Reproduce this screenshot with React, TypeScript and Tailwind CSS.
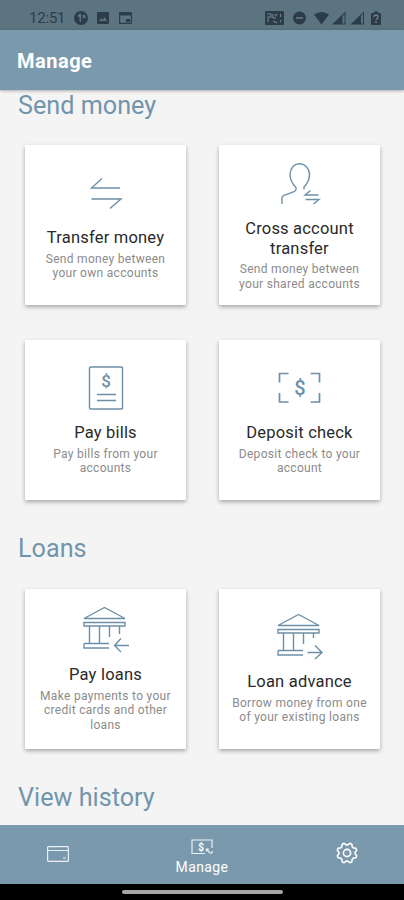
import type { ReactNode } from "react";

const ink = "#6d90a6";

function Svg({ w, h, className = "", children }: { w: number; h: number; className?: string; children: ReactNode }) {
  return (
    <svg width={w} height={h} viewBox={`0 0 ${w} ${h}`} fill="none" stroke={ink} strokeWidth="1.4" className={`block shrink-0 overflow-visible ${className}`}>
      {children}
    </svg>
  );
}

const Transfer = () => (
  <Svg w={44} h={44}>
    <path d="M36 17H7.500L18 7.500M7.500 28H37L26 37.500" />
  </Svg>
);

const Person = () => (
  <Svg w={44} h={44}>
    <path d="M4 42V36Q4 34 6 33.300L15.500 29.800Q19 28.500 17.800 25.300C14 21.500 12 17 12 12C12.500 5.500 16.500 1.800 21.500 1.800S31 5.500 31.500 12C31.500 17 29.500 21.500 26 25V27.500" />
    <path d="M40.500 33H27L32.500 28.500M27.500 37.500H41L35.500 42" />
  </Svg>
);

const Dollar = ({ x, y, size }: { x: number; y: number; size: number }) => (
  <text x={x} y={y} fontSize={size} fill={ink} stroke="none" textAnchor="middle" className="font-[Roboto,sans-serif] font-medium">$</text>
);

const Bill = () => (
  <Svg w={44} h={44}>
    <rect x="5.500" y="1" width="33" height="42" rx="1" />
    <Dollar x={22} y={20.5} size={17} />
    <path d="M13 28.500H32M13 34.500H32" />
  </Svg>
);

const Deposit = () => (
  <Svg w={44} h={44}>
    <path strokeWidth="1.700" d="M1.500 16.500V7.500H10.500M32.500 7.500H41.500V16.500M41.500 27V36H32.500M10.500 36H1.500V27" />
    <Dollar x={22} y={28.5} size={20} />
  </Svg>
);

const Bank = ({ out = false }: { out?: boolean }) => (
  <Svg w={46} h={46}>
    <path d="M1 12.500L21.500 1.500L42 12.500ZM1 16.500H42V20H1ZM6.500 20V37M16.500 20V37M26.500 20V31M1 37.500H26M1 37.500V42H26" />
    {out ? <path d="M36.500 20V25M30.500 39.500H45.500M38 32.500L45 39.500L38 46" /> : <path d="M36.500 20V28M46 39.500H31.500M38 32.500L31.500 39.500L38 46" />}
  </Svg>
);

type Tile = { title: ReactNode; text: string[]; icon: ReactNode; pad: string };

const send: Tile[] = [
  { title: "Transfer money", text: ["Send money between", "your own accounts"], icon: <Transfer />, pad: "pt-[26px]" },
  { title: <>Cross account<br />transfer</>, text: ["Send money between", "your shared accounts"], icon: <Person />, pad: "pt-[17px]" },
  { title: "Pay bills", text: ["Pay bills from your", "accounts"], icon: <Bill />, pad: "pt-[26px]" },
  { title: "Deposit check", text: ["Deposit check to your", "account"], icon: <Deposit />, pad: "pt-[26px]" },
];

const loans: Tile[] = [
  { title: "Pay loans", text: ["Make payments to your", "credit cards and other", "loans"], icon: <Bank />, pad: "pt-[17px]" },
  { title: "Loan advance", text: ["Borrow money from one", "of your existing loans"], icon: <Bank out />, pad: "pt-[24px]" },
];

function Grid({ tiles }: { tiles: Tile[] }) {
  return (
    <div className="grid grid-cols-[161px_161px] gap-x-[33px] gap-y-[35px] pl-[25px]">
      {tiles.map((t, i) => (
        <div key={i} className={`flex h-[160px] flex-col items-center rounded-[1px] bg-white text-center shadow-[0_2px_4px_rgba(0,0,0,0.32)] ${t.pad}`}>
          {t.icon}
          <div className="mt-[13px] text-[16.500px] leading-[19.500px] tracking-[0.200px] text-[#292929]">{t.title}</div>
          <div className="mt-[4px] text-[12px] leading-[14.600px] tracking-[0.300px] text-[#8b8b8b]">
            {t.text.map((line) => <div key={line} className="whitespace-nowrap">{line}</div>)}
          </div>
        </div>
      ))}
    </div>
  );
}

const heading = "pl-[18px] text-[25.200px] leading-[30px] text-[#7295ac]";

function StatusBar() {
  return (
    <div className="flex h-[30px] shrink-0 items-center bg-[#5c7380] pt-[6px] pl-[29px] text-[#2c3c48]">
      <span className="w-[45px] text-[15px] leading-[20px] tracking-[-0.200px]">12:51</span>
      <svg width="59" height="14" viewBox="0 0 59 14" fill="currentColor">
        <circle cx="7" cy="7" r="7" />
        <path d="M4 3.500L7 2.500V11.500L5.500 10V6.500L4 5.500ZM8.500 4H11.500V7H8.500Z" fill="#5c7380" />
        <path fillRule="evenodd" d="M24 1H34Q35 1 35 2V12Q35 13 34 13H24Q23 13 23 12V2Q23 1 24 1ZM25 10H33L30.500 6L28.500 9L27 7Z" />
        <path fillRule="evenodd" d="M46 1H57Q58 1 58 2V12Q58 13 57 13H46Q45 13 45 12V2Q45 1 46 1ZM46.200 4.500V11.800H56.800V4.500ZM52 8H56V11H52Z" />
      </svg>
      <svg className="ml-[132px]" width="118" height="14" viewBox="0 0 118 14" fill="currentColor">
        <rect y="0" width="19" height="14" rx="1" />
        <path d="M2 3H6V6H3V11M8 3V7H11M8 10L12 12M12 3L10 5M15.500 3V6M15.500 9V11" fill="none" stroke="#71858f" strokeWidth="1.100" />
        <circle cx="34.500" cy="7" r="6.500" />
        <path d="M31 7H38" stroke="#5c7380" strokeWidth="1.800" />
        <path d="M49 3.500Q56.500-1.500 64 3.500L56.500 13.500Z" />
        <path d="M67 13.500L80.500.500V13.500ZM85.500 13.500L99 .500V13.500Z" />
        <path d="M77.500 5L79.500 3V12.500H77.500ZM96 5L98 3V12.500H96Z" fill="#5c7380" />
        <path d="M107 2H109V.500H113V2H115Q116 2 116 3V13Q116 14 115 14H107Q106 14 106 13V3Q106 2 107 2Z" />
        <path d="M109 6Q109 4 111 4T113 6Q113 7 111 8.500M111 10V12" fill="none" stroke="#71858f" strokeWidth="1.300" />
      </svg>
    </div>
  );
}

const gear = Array.from({ length: 64 }, (_, i) => {
  const a = (i / 64) * Math.PI * 2 + Math.PI / 8;
  const r = 9.1 + 1.0 * Math.tanh(3 * Math.cos((a - Math.PI / 8) * 8));
  return `${(11 + r * Math.cos(a)).toFixed(2)},${(11 + r * Math.sin(a)).toFixed(2)}`;
}).join(" ");

export default function App() {
  return (
    <div className="flex h-[900px] w-[404px] flex-col overflow-hidden bg-[#f4f4f4] font-[Roboto,sans-serif]">
      <StatusBar />
      <header className="z-10 flex h-[60px] shrink-0 items-center bg-[#7b99ad] pt-[2px] pl-[17px] text-[20px] font-bold tracking-[0.500px] text-white shadow-[0_1px_3px_rgba(0,0,0,0.3)]">Manage</header>
      <main className="h-[735px] shrink-0 overflow-hidden pt-px">
        <h2 className={`${heading} mb-[24px]`}>Send money</h2>
        <Grid tiles={send} />
        <h2 className={`${heading} mt-[34px] mb-[25px]`}>Loans</h2>
        <Grid tiles={loans} />
        <h2 className={`${heading} mt-[34px]`}>View history</h2>
      </main>
      <nav className="flex h-[59px] shrink-0 bg-[#7b99ad] text-white">
        <div className="flex w-[116px] items-center justify-center pb-[2px]">
          <svg width="22" height="16" viewBox="0 0 22 16" fill="none" stroke="#e9f1f6" strokeWidth="1.200">
            <rect x=".6" y=".6" width="20.800" height="14.800" rx="1" /><path d="M1 4.500H21M16 12H19" />
          </svg>
        </div>
        <div className="flex w-[172px] flex-col items-center pt-[14px]">
          <svg width="22" height="16" viewBox="0 0 22 16" fill="none" stroke="#e9f1f6" strokeWidth="1.200">
            <path d="M14 14.500H1V1H21V9" />
            <text x="10" y="11.500" fontSize="10" textAnchor="middle" fill="white" stroke="none" className="font-bold">$</text>
            <path d="M15.500 10L18.500 13.500M15.500 12.500V10H18M18 14H21V12" />
          </svg>
          <span className="mt-[3px] text-[14px] leading-[18px] tracking-[0.400px]">Manage</span>
        </div>
        <div className="flex w-[116px] items-center justify-center pb-[3px] pl-px">
          <svg width="22" height="22" viewBox="0 0 22 22" fill="none" stroke="white" strokeWidth="1.600" strokeLinejoin="round">
            <polygon points={gear} /><circle cx="11" cy="11" r="3.600" />
          </svg>
        </div>
      </nav>
      <footer className="flex h-[16px] shrink-0 items-center justify-center bg-black">
        <div className="h-[4px] w-[161px] rounded-full bg-[#a6a6a6]" />
      </footer>
    </div>
  );
}
